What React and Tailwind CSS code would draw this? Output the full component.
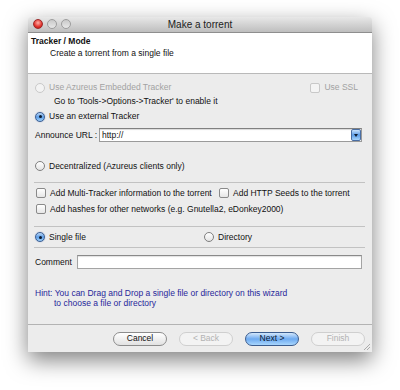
import React from "react";

const font = { fontFamily: '"Liberation Sans", Arial, sans-serif' };

function Radio({ checked, disabled, label, className = "" }) {
  return (
    <div className={`flex items-center ${className}`}>
      {checked ? (
        <span className="relative w-[10px] h-[10px] rounded-full border border-[#3d5f92] bg-gradient-to-b from-[#bcd9f7] via-[#5d9de6] to-[#9cd0fb] flex items-center justify-center shadow-[0_0_1px_rgba(0,60,160,0.6)]">
          <span className="w-[3px] h-[3px] rounded-full bg-[#0d1a2c]" />
        </span>
      ) : (
        <span
          className={`w-[10px] h-[10px] rounded-full border ${
            disabled
              ? "border-[#c9c9c9] bg-[#f3f3f3]"
              : "border-[#7f7f7f] bg-gradient-to-b from-[#ffffff] to-[#e4e4e4]"
          }`}
        />
      )}
      <span className={`ml-[4px] ${disabled ? "text-[#a2a2a2]" : "text-[#111]"}`}>{label}</span>
    </div>
  );
}

function Check({ label, disabled, className = "" }) {
  return (
    <div className={`flex items-center ${className}`}>
      <span
        className={`w-[10px] h-[10px] rounded-[2px] border ${
          disabled
            ? "border-[#c8c8c8] bg-[#f4f4f4]"
            : "border-[#8a8a8a] bg-gradient-to-b from-[#ffffff] to-[#e6e6e6]"
        }`}
      />
      <span className={`ml-[4px] ${disabled ? "text-[#a2a2a2]" : "text-[#111]"}`}>{label}</span>
    </div>
  );
}

function Button({ label, primary, disabled, className = "" }) {
  let cls = "border-[#8c8c8c] bg-gradient-to-b from-[#ffffff] via-[#f0f0f0] to-[#e2e2e2] text-[#111]";
  if (primary)
    cls = "border-[#3b5c8e] bg-gradient-to-b from-[#d3e7fb] via-[#6eaaf0] to-[#a8d6fd] text-[#0c1a33]";
  if (disabled) cls = "border-[#cfcfcf] bg-[#f3f3f3] text-[#b2b2b2]";
  return (
    <div
      className={`w-[54px] h-[14px] rounded-full border flex items-center justify-center text-[8.5px] ${cls} ${className}`}
    >
      {label}
    </div>
  );
}

function Sep({ className = "" }) {
  return <div className={`ml-[6px] mr-[7px] h-px bg-[#c2c2c2] ${className}`} />;
}

export default function App() {
  return (
    <div className="w-[400px] h-[390px] bg-white pt-[17px] pl-[28px]" style={font}>
      <div className="w-[344px] h-[335px] flex flex-col bg-[#ececec] shadow-[0_8px_22px_rgba(0,0,0,0.5)] rounded-t-[4px]">
        {/* title bar */}
        <div className="relative h-[16px] rounded-t-[4px] bg-gradient-to-b from-[#e8e8e8] to-[#bebebe] border-b border-[#8e8e8e] flex items-center justify-center text-[10px] text-[#1c1c1c]">
          <div className="absolute left-[5px] top-[2px] flex gap-[4px]">
            <span className="w-[10px] h-[10px] rounded-full border border-[#9c2a2a] bg-[radial-gradient(circle_at_50%_35%,#ffb0a8,#e1322c_60%,#a8120f)]" />
            <span className="w-[10px] h-[10px] rounded-full border border-[#9d9d9d] bg-gradient-to-b from-[#c9c9c9] to-[#e8e8e8]" />
            <span className="w-[10px] h-[10px] rounded-full border border-[#9d9d9d] bg-gradient-to-b from-[#c9c9c9] to-[#e8e8e8]" />
          </div>
          Make a torrent
        </div>

        {/* header */}
        <div className="h-[41px] bg-white border-b border-[#b9b9b9] text-[8.5px] text-[#111]">
          <div className="mt-[2px] pl-[3px] h-[12px] leading-[12px] font-bold">Tracker / Mode</div>
          <div className="pl-[22px] h-[12px] leading-[12px]">Create a torrent from a single file</div>
        </div>

        {/* content */}
        <div className="flex-1 flex flex-col text-[8.5px]">
          <div className="mt-[7px] h-[13px] pl-[7px] pr-[14px] flex items-center justify-between">
            <Radio disabled label="Use Azureus Embedded Tracker" />
            <Check disabled label="Use SSL" />
          </div>
          <div className="h-[15px] pl-[26px] flex items-center text-[#111]">
            Go to 'Tools-&gt;Options-&gt;Tracker' to enable it
          </div>
          <div className="h-[15px] pl-[7px] flex items-center">
            <Radio checked label="Use an external Tracker" />
          </div>
          <div className="mt-[4px] h-[14px] pl-[7px] pr-[10px] flex items-center">
            <span className="w-[64px] text-[#111]">Announce URL :</span>
            <div className="flex-1 h-[14px] flex items-center bg-white border border-[#9a9a9a] border-t-[#808080] shadow-[inset_0_1px_1px_rgba(0,0,0,0.15)]">
              <span className="pl-[2px] flex-1 text-[#111]">http://</span>
              <span className="w-[10px] h-[12px] rounded-[2px] border border-[#4a6ea3] bg-gradient-to-b from-[#c9e2fb] via-[#5c9ce6] to-[#a6d4fc] flex items-center justify-center">
                <span className="w-0 h-0 border-l-[2px] border-r-[2px] border-t-[3px] border-l-transparent border-r-transparent border-t-[#0f1c30]" />
              </span>
            </div>
          </div>
          <div className="mt-[17px] h-[14px] pl-[7px] flex items-center">
            <Radio label="Decentralized (Azureus clients only)" />
          </div>

          <Sep className="mt-[9px]" />

          <div className="mt-[3px] h-[14px] pl-[8px] flex items-center">
            <Check label="Add Multi-Tracker information to the torrent" className="w-[183px]" />
            <Check label="Add HTTP Seeds to the torrent" />
          </div>
          <div className="mt-[1px] h-[16px] pl-[8px] flex items-center">
            <Check label="Add hashes for other networks (e.g. Gnutella2, eDonkey2000)" />
          </div>

          <Sep className="mt-[9px]" />

          <div className="mt-[3px] h-[14px] pl-[7px] flex items-center">
            <Radio checked label="Single file" className="w-[169px]" />
            <Radio label="Directory" />
          </div>

          <Sep className="mt-[3px]" />

          <div className="mt-[7px] h-[14px] pl-[7px] pr-[10px] flex items-center">
            <span className="w-[42px] text-[#111]">Comment</span>
            <div className="flex-1 h-[14px] bg-white border border-[#a4a4a4] border-t-[#8a8a8a] shadow-[inset_0_1px_1px_rgba(0,0,0,0.12)]" />
          </div>

          <div className="mt-[19px] pl-[7px] text-[#27279a] leading-[10px]">
            <div>Hint: You can Drag and Drop a single file or directory on this wizard</div>
            <div className="pl-[19px]">to choose a file or directory</div>
          </div>

          <div className="mt-auto relative h-[28px] border-t border-[#b3b3b3] flex items-center justify-end pr-[7px] gap-[12px]">
            <Button label="Cancel" />
            <Button label="< Back" disabled />
            <Button label="Next >" primary />
            <Button label="Finish" disabled />
            <svg className="absolute right-[1px] bottom-[1px]" width="9" height="9" viewBox="0 0 9 9">
              <path d="M8 2 L2 8 M8 5 L5 8" stroke="#9a9a9a" strokeWidth="0.8" />
            </svg>
          </div>
        </div>
      </div>
    </div>
  );
}
